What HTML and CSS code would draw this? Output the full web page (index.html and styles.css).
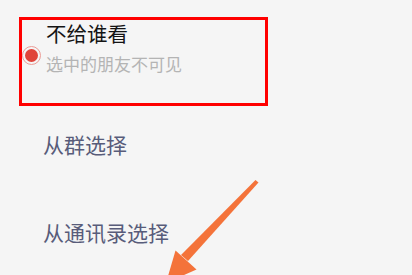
FILE: index.html
```html
<!DOCTYPE html>
<html lang="zh">
<head>
<meta charset="utf-8">
<link rel="stylesheet" href="styles.css">
</head>
<body>
<div class="page">
  <div class="box">
    <span class="radio"><span class="dot"></span></span>
    <div class="texts">
      <div class="title">不给谁看</div>
      <div class="sub">选中的朋友不可见</div>
    </div>
  </div>
  <div class="option first">从群选择</div>
  <div class="option second">从通讯录选择</div>
  <svg class="arrow" width="412" height="275" viewBox="0 0 412 275">
    <polygon fill="#f4733a" points="255.5,180 258.5,182.5 188,261 181,255"/>
    <polygon fill="#f4733a" points="166,283 175.5,250.5 196.5,269.5"/>
  </svg>
</div>
</body>
</html>
```
FILE: styles.css
```css
html, body {
  margin: 0;
  padding: 0;
  background: #f5f5f5;
}
.page {
  position: relative;
  width: 412px;
  height: 275px;
  overflow: hidden;
  font-family: "Noto Sans CJK SC", "Noto Sans", sans-serif;
}
.box {
  margin: 17px 0 0 19px;
  width: 243px;
  height: 83px;
  border: 3px solid #ff0000;
  display: flex;
  align-items: flex-start;
}
.radio {
  width: 17px;
  height: 17px;
  border: 1.5px solid #ec9c96;
  border-radius: 50%;
  margin-top: 26px;
  margin-left: -0.5px;
  display: flex;
  align-items: center;
  justify-content: center;
  flex: none;
}
.dot {
  width: 13px;
  height: 13px;
  border-radius: 50%;
  background: #e0443a;
}
.texts {
  margin-left: 5.5px;
}
.title {
  font-size: 20.5px;
  line-height: 27px;
  color: #141414;
}
.sub {
  margin-top: 5px;
  font-size: 17px;
  line-height: 24px;
  color: #b4b4b4;
}
.option {
  margin-left: 43px;
  font-size: 21px;
  line-height: 30px;
  color: #585c7a;
}
.first {
  margin-top: 23px;
}
.second {
  margin-top: 58px;
}
.arrow {
  position: absolute;
  left: 0;
  top: 0;
}
```
